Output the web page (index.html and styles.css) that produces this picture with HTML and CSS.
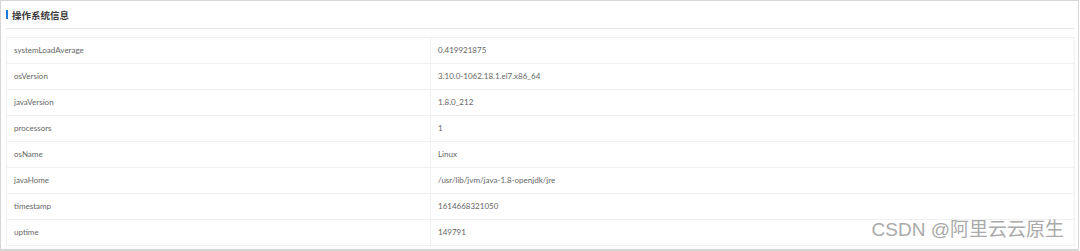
FILE: index.html
```html
<!DOCTYPE html>
<html lang="zh">
<head>
<meta charset="utf-8">
<link rel="stylesheet" href="styles.css">
</head>
<body>
<div class="card">
  <div class="card-header">
    <span class="bar"></span>
    <span class="title">操作系统信息</span>
  </div>
  <table class="info">
    <tr><td class="k">systemLoadAverage</td><td class="v">0.419921875</td></tr>
    <tr><td class="k">osVersion</td><td class="v">3.10.0-1062.18.1.el7.x86_64</td></tr>
    <tr><td class="k">javaVersion</td><td class="v">1.8.0_212</td></tr>
    <tr><td class="k">processors</td><td class="v">1</td></tr>
    <tr><td class="k">osName</td><td class="v">Linux</td></tr>
    <tr><td class="k">javaHome</td><td class="v">/usr/lib/jvm/java-1.8-openjdk/jre</td></tr>
    <tr><td class="k">timestamp</td><td class="v">1614668321050</td></tr>
    <tr><td class="k">uptime</td><td class="v">149791</td></tr>
  </table>
  <div class="watermark">CSDN @阿里云云原生</div>
</div>
</body>
</html>
```
FILE: styles.css
```css
html, body {
  margin: 0;
  padding: 0;
  background: #ffffff;
}
body {
  font-family: "Lato", "Noto Sans CJK SC", sans-serif;
  color: #606266;
}
.card {
  position: relative;
  box-sizing: border-box;
  width: 1079px;
  height: 251px;
  border: 1px solid #d6d6d6;
  border-bottom-width: 2px;
  background: #fff;
}
.card-header {
  display: flex;
  align-items: center;
  height: 27px;
  margin: 0 4px 0 5px;
  border-bottom: 1px solid #e4e4e4;
}
.bar {
  display: block;
  width: 2px;
  height: 9px;
  background: #1e78e0;
  margin-right: 4px;
}
.title {
  font-family: "Noto Sans CJK SC", sans-serif;
  font-size: 9.5px;
  font-weight: bold;
  color: #3a3a3a;
}
.info {
  margin: 8px 3px 0 5px;
  width: calc(100% - 8px);
  border-collapse: collapse;
  border: 1px solid #f0f0f0;
  font-size: 8px;
  table-layout: fixed;
}
.info td {
  height: 24px;
  padding: 0 7px 1px;
  border-top: 1px solid #f0f0f0;
  vertical-align: middle;
  color: #666;
}
.info td.k {
  width: 409px;
  border-right: 1px solid #f0f0f0;
}
.watermark {
  position: absolute;
  right: 14px;
  bottom: 8px;
  font-family: "Liberation Sans", "Noto Sans CJK SC", sans-serif;
  font-size: 19px;
  color: #aaaaaa;
  text-shadow: 0 0 1px #fff;
}
```
